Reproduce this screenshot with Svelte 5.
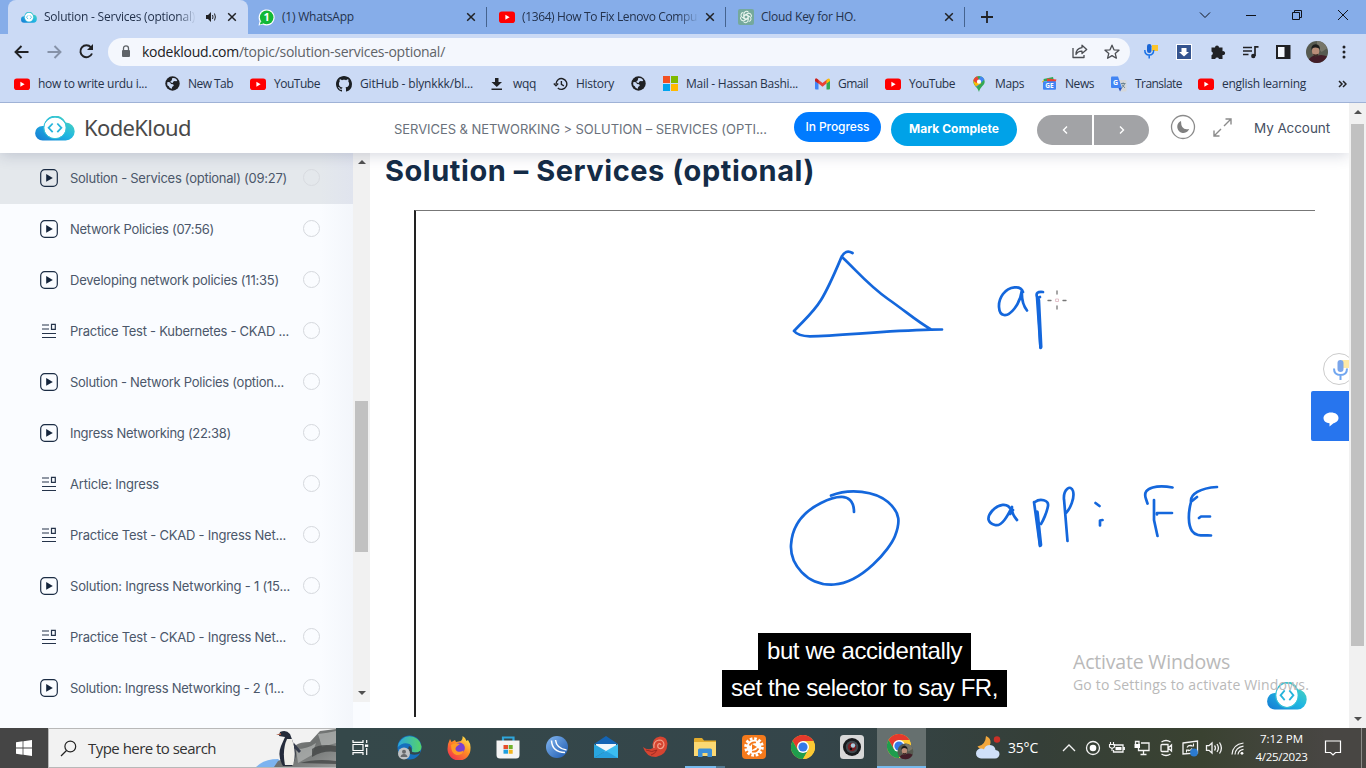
<script>
  const tabs = [
    { icon: 'kk', title: 'Solution - Services (optional)', w: 240, tw: 151, clip: 152, active: true },
    { icon: 'wa', title: '(1) WhatsApp', w: 239, tw: 72 },
    { icon: 'yt', title: '(1364) How To Fix Lenovo Compu', w: 239, tw: 175, clip: 177 },
    { icon: 'gpt', title: 'Cloud Key for HO.', w: 239, tw: 95 }
  ];
  const bookmarks = [
    { icon: 'yt', label: 'how to write urdu i...', w: 150, tw: 109 },
    { icon: 'globe', label: 'New Tab', w: 86, tw: 45 },
    { icon: 'yt', label: 'YouTube', w: 86, tw: 46 },
    { icon: 'github', label: 'GitHub - blynkkk/bl...', w: 153, tw: 113 },
    { icon: 'download', label: 'wqq', w: 63, tw: 23 },
    { icon: 'history', label: 'History', w: 78, tw: 38 },
    { icon: 'globe', label: '', w: 32, tw: 0 },
    { icon: 'ms', label: 'Mail - Hassan Bashi...', w: 152, tw: 112 },
    { icon: 'gmail', label: 'Gmail', w: 71, tw: 30 },
    { icon: 'yt', label: 'YouTube', w: 86, tw: 46 },
    { icon: 'maps', label: 'Maps', w: 70, tw: 29 },
    { icon: 'news', label: 'News', w: 70, tw: 29 },
    { icon: 'translate', label: 'Translate', w: 87, tw: 47 },
    { icon: 'yt', label: 'english learning', w: 112, tw: 84 }
  ];
  const lessons = [
    { kind: 'video', title: 'Solution - Services (optional) (09:27)', tw: 217, active: true },
    { kind: 'video', title: 'Network Policies (07:56)', tw: 144 },
    { kind: 'video', title: 'Developing network policies (11:35)', tw: 209 },
    { kind: 'quiz', title: 'Practice Test - Kubernetes - CKAD ...', tw: 219 },
    { kind: 'video', title: 'Solution - Network Policies (option...', tw: 214 },
    { kind: 'video', title: 'Ingress Networking (22:38)', tw: 161 },
    { kind: 'quiz', title: 'Article: Ingress', tw: 89 },
    { kind: 'quiz', title: 'Practice Test - CKAD - Ingress Net...', tw: 216 },
    { kind: 'video', title: 'Solution: Ingress Networking - 1 (15...', tw: 220 },
    { kind: 'quiz', title: 'Practice Test - CKAD - Ingress Net...', tw: 216 },
    { kind: 'video', title: 'Solution: Ingress Networking - 2 (1...', tw: 214 }
  ];
  const apps = ['taskview', 'edge', 'firefox', 'store', 'swirl', 'mail', 'shell', 'folder', 'orange', 'chrome', 'camera', 'chromeUser'];
  const tray = ['up', 'rec', 'battery', 'monitor', 'meet', 'sync', 'speaker', 'wifi'];

  // Spreads the letters so that the label takes up the given width.
  function fit(node, width) {
    const natural = node.getBoundingClientRect().width;
    const n = node.textContent.length;
    if (width && n) node.style.letterSpacing = `${(width - natural) / n}px`;
  }
</script>

{#snippet cloud(w, h)}
  <svg width={w} height={h} viewBox="0 0 40 26" preserveAspectRatio="none">
    <defs>
      <linearGradient id="kkg" x1="0" y1="1" x2="1" y2="0">
        <stop offset="0" stop-color="#1679d3" /><stop offset=".5" stop-color="#1fb5e2" /><stop offset="1" stop-color="#56dcb4" />
      </linearGradient>
    </defs>
    <path d="M7.800 25.500a7.600 7.600 0 0 1-.2-15.200h1.400a11.300 11.300 0 0 1 21.800-3.600A9.410 9.410 0 0 1 30.600 25.500z" fill="url(#kkg)" />
    <circle cx="20" cy="12.300" r="10.800" fill="#fff" />
    <circle cx="20" cy="12.300" r="11.300" fill="none" stroke="#35c4d6" stroke-width="1" />
    <path d="M17.700 7.800 13.600 12.300l4.100 4.500M22.300 7.800l4.100 4.500-4.100 4.500" fill="none" stroke="#27b5dc" stroke-width="1.800" />
  </svg>
{/snippet}

{#snippet chromeLogo()}
  <circle cx="12" cy="12" r="12" fill="#fcc934" />
  <path d="M1.600 6A12 12 0 0 1 22.400 6H12L6.800 15z" fill="#e5392c" />
  <path d="M1.600 6A12 12 0 0 0 12 24l5.200-9H6.800z" fill="#1f9d4d" />
  <path d="M12 24 17.200 15A6 6 0 0 0 17.200 9L22.400 6A12 12 0 0 1 12 24z" fill="#fcc934" />
  <circle cx="12" cy="12" r="6" fill="#fff" /><circle cx="12" cy="12" r="4.600" fill="#3579e8" />
{/snippet}

{#snippet face()}
  <circle cx="12" cy="12" r="12" fill="#565a50" />
  <path d="M12 0a12 12 0 0 1 11 8l-6 4-5-6z" fill="#77766a" />
  <path d="M3 20q4-5 9-4 6-2 11 1-4 7-11 7-6 0-9-4z" fill="#431d28" />
  <ellipse cx="10.500" cy="11" rx="4" ry="5.500" fill="#b98d78" />
  <path d="M6 10q-1-6 4.500-6.500Q16 4 15 10l-1-2q-4-2-7 0z" fill="#1d1c1c" />
  <path d="M7.500 14q3 1.500 6 0 0 3-3 3.500-2.500-.5-3-3.500z" fill="#3d2b27" />
{/snippet}

{#snippet icon(name)}
  {#if name === 'yt'}
    <svg width="16" height="16" viewBox="0 0 16 16"><rect y="2.500" width="16" height="11.500" rx="2.800" fill="#f00" /><path d="M6.400 5.800v4.900l4.200-2.450z" fill="#fff" /></svg>
  {:else if name === 'kk'}
    {@render cloud(16, 11)}
  {:else if name === 'wa'}
    <svg width="17" height="17" viewBox="0 0 17 17"><path d="M.5 16.500 1.600 12.300A8 8 0 1 1 4.800 15.500z" fill="#fff" /><circle cx="8.700" cy="8.400" r="6.800" fill="#12b836" /><path d="M1.800 15.400 3 12l2.500 2.500z" fill="#12b836" /><text x="8.600" y="12.400" text-anchor="middle" font-size="11" font-weight="700" fill="#fff" font-family="Open Sans, sans-serif">1</text></svg>
  {:else if name === 'gpt'}
    <svg width="16" height="16" viewBox="0 0 16 16"><rect width="16" height="16" rx="2" fill="#75a99c" />
      <g fill="none" stroke="#eaf6ef" stroke-width="1.050">
        {#each [0, 60, 120, 180, 240, 300] as a}<path transform="rotate({a} 8 8)" d="M5.900 8.800V4.700A2.500 2.500 0 0 1 10.500 3.500M5.900 6.900 9.300 5" />{/each}
      </g></svg>
  {:else if name === 'globe'}
    <svg width="15" height="15" viewBox="0 0 15 15"><circle cx="7.500" cy="7.500" r="7.200" fill="#202124" /><path d="M2.200 6.200q2-.6 3 .4l.8 1.300 2.200.3.600 1.500-1.700 1.300-.1 1.700q-2.700-.3-3.200-2.500L2.300 9.200zM7 2.200q2.500-.8 4.200.8l1.100 1.400-1 .9-1.700-.4-1.500.9-.3 1.200-1.900-.4-.5-1.300 1.500-1z" fill="#cbdaf5" /></svg>
  {:else if name === 'github'}
    <svg width="16" height="16" viewBox="0 0 16 16"><path fill="#1b1f23" d="M8 0C3.580 0 0 3.580 0 8c0 3.540 2.290 6.530 5.470 7.590.4.070.55-.17.55-.38 0-.19-.01-.82-.01-1.490-2.010.37-2.530-.49-2.690-.94-.09-.23-.48-.94-.82-1.130-.28-.15-.68-.52-.01-.53.63-.01 1.080.58 1.230.82.72 1.210 1.870.87 2.330.66.07-.52.28-.87.51-1.070-1.780-.2-3.640-.89-3.640-3.950 0-.87.31-1.590.82-2.150-.08-.2-.36-1.020.08-2.120 0 0 .67-.21 2.200.82.64-.18 1.320-.27 2-.27s1.360.09 2 .27c1.530-1.040 2.200-.82 2.200-.82.44 1.100.16 1.920.08 2.120.51.56.82 1.270.82 2.150 0 3.070-1.870 3.750-3.650 3.950.29.25.54.73.54 1.480 0 1.070-.01 1.930-.01 2.200 0 .21.15.46.55.38A8.010 8.010 0 0 0 16 8c0-4.420-3.580-8-8-8z" /></svg>
  {:else if name === 'download'}
    <svg width="14" height="14" viewBox="0 0 14 14"><path d="M5 1h3.500v4H12L6.800 10 1.500 5H5zM1.500 11.500H12V13H1.500z" fill="#202124" /></svg>
  {:else if name === 'history'}
    <svg width="15" height="14" viewBox="0 0 15 14"><path d="M3 7a5.400 5.400 0 1 1 1.800 4M.8 6.500 3 8.700 5.200 6.500M8.400 4v3.400l2.500 1.400" fill="none" stroke="#202124" stroke-width="1.400" /></svg>
  {:else if name === 'ms'}
    <svg width="15" height="15" viewBox="0 0 15 15"><path d="M0 0h7v7H0z" fill="#f25022" /><path d="M8 0h7v7H8z" fill="#7fba00" /><path d="M0 8h7v7H0z" fill="#00a4ef" /><path d="M8 8h7v7H8z" fill="#ffb900" /></svg>
  {:else if name === 'gmail'}
    <svg width="15" height="12" viewBox="0 0 15 12"><path d="M0 2v8.500q0 1 1 1h2.500V5z" fill="#4285f4" /><path d="M15 2v8.500q0 1-1 1h-2.500V5z" fill="#34a853" /><path d="M0 2q0-2 2-1.300L7.500 5 13 .7l-1.500 4.900L7.500 8.700l-4-3.100L0 3z" fill="#ea4335" /><path d="M11.500 2 13 .7q2-.7 2 1.500v.8l-3.500 2.600z" fill="#fbbc04" /><path d="M0 2.200Q0 0 2 .7l1.500 1.200v3.700L0 3z" fill="#c5221f" /></svg>
  {:else if name === 'maps'}
    <svg width="12" height="16" viewBox="0 0 12 16"><path d="M6 0a5.700 5.700 0 0 1 5.700 5.700C11.700 9.500 7 10.500 6 16 5 11.500.3 9.500.3 5.700A5.700 5.700 0 0 1 6 0z" fill="#34a853" /><path d="M7.800.3q2.500.7 3.500 3.200L4 11 2 9z" fill="#4285f4" /><path d="M1.600 2.100 4.500 4.400 8.500 7 3 10.400Q-1.200 6 1.600 2.100z" fill="#fbbc04" /><path d="M1.600 2.100A5.700 5.700 0 0 1 4.200.3L6 4 3.500 7 .4 5Q.5 3.500 1.600 2.100z" fill="#ea4335" /><circle cx="6" cy="5.700" r="2.100" fill="#fff" /></svg>
  {:else if name === 'news'}
    <svg width="15" height="13" viewBox="0 0 15 13"><path d="M1.500 2 11 0l1 4H2z" fill="#34a853" /><path d="M5 1.500 14.500 2.500 13 6H5z" fill="#ea4335" /><path d="M0 4.500 2 3v4z" fill="#fbbc04" /><rect x="1" y="4.300" width="13" height="8.500" rx="1" fill="#4285f4" /><text x="7.500" y="11" text-anchor="middle" font-size="6.500" font-weight="700" font-family="Open Sans, sans-serif" fill="#fff">GE</text></svg>
  {:else if name === 'translate'}
    <svg width="16" height="16" viewBox="0 0 16 16"><path d="M6 4h8.500q1 0 1 1v9.500q0 1-1 1H9z" fill="#d5d7da" /><path d="M1 .5h6L11 12H1q-1 0-1-1V1.500q0-1 1-1z" fill="#4285f4" /><path d="m7.500 12 1.500 3.500 2-3.500z" fill="#2a56c6" /><path d="M10 7.500h4.500M12.200 6.500v1M13.600 7.800q-1 3-3 4M11 8.500q1 2 3 3.300" stroke="#607d8b" fill="none" stroke-width=".9" /><text x="4.600" y="9" text-anchor="middle" font-size="7" font-weight="700" font-family="Open Sans, sans-serif" fill="#fff">G</text></svg>
  {/if}
{/snippet}

{#snippet app(name)}
  {#if name === 'taskview'}
    <svg width="17" height="17" viewBox="0 0 17 17" fill="none" stroke="#fff" stroke-width="1.200"><path d="M1 1v2.400h10V1M1 16v-2.400h10V16M1 5.500h10v6H1zM14.700 1v3M14.700 9v7" /><path d="M13 5.500h3.200v2.400H13z" fill="#fff" stroke="none" /></svg>
  {:else if name === 'edge'}
    <svg width="25" height="25" viewBox="0 0 25 25"><defs><linearGradient id="eg"><stop offset="0" stop-color="#2aa7e0" /><stop offset="1" stop-color="#56d467" /></linearGradient></defs><circle cx="12.500" cy="12.500" r="12" fill="#1670bd" /><path d="M.7 12A12 12 0 0 1 24.500 11.500q0 6-6.500 6-4 0-3-2.500Q16 11 12.500 9 6 6.500.7 12z" fill="url(#eg)" /><path d="M11 12.500q-1 6 3.500 8.500 5 1 8.500-3l2 3-5 4-4-2q-8-3-5-10.500z" fill="#35484a" opacity="0" /><path d="M12 11q3 1.500 2.800 4-.8 2.500 3.200 2.500 3 0 5-1.500l.5 2q-5 3-10 1-4-2-1.500-8z" fill="#34464a" /><circle cx="7" cy="18.500" r="6" fill="#bfc2c4" /><circle cx="7" cy="16.700" r="2" fill="#67696c" /><path d="M3.500 22q.5-3 3.500-3t3.500 3z" fill="#67696c" /></svg>
  {:else if name === 'firefox'}
    <svg width="24" height="25" viewBox="0 0 24 25"><defs><linearGradient id="fx" x1="1" y1="0" x2=".2" y2="1"><stop offset=".1" stop-color="#ffe14a" /><stop offset=".5" stop-color="#ff8a25" /><stop offset="1" stop-color="#f0304f" /></linearGradient></defs><path d="M1 9 3 4l1.500 3L8 5l1 2 5-1q2-2 1.500-5 3 1.500 4 5l1.500-1q3 4 2.500 9A11.500 11.500 0 0 1 .5 14z" fill="url(#fx)" /><circle cx="12.500" cy="13" r="5.400" fill="#7b3fd0" /><path d="M4 10q4-3 9-1l-3.500 2.500q-2.500 3 1 5 3 1 6-1-1 5-7 4.500Q4 18.500 4 10z" fill="#ff9a26" /></svg>
  {:else if name === 'store'}
    <svg width="24" height="24" viewBox="0 0 24 24"><path d="M7 7V2.500h10.500V7" fill="none" stroke="#2fa5da" stroke-width="2.200" /><path d="M.5 5.500h23V20q0 3.500-3.500 3.500H4Q.5 23.500.5 20z" fill="#f4f4f4" /><path d="M7.500 10H12v4H7.500z" fill="#e64d2b" /><path d="M12.700 10h4v4h-4z" fill="#70b12c" /><path d="M7.500 14.700H12v4H7.500z" fill="#1d9fe0" /><path d="M12.700 14.700h4v4h-4z" fill="#f3b51e" /></svg>
  {:else if name === 'swirl'}
    <svg width="22" height="22" viewBox="0 0 22 22"><defs><linearGradient id="sw" x1="0" y1="0" x2="1" y2="1"><stop offset="0" stop-color="#85b9f2" /><stop offset="1" stop-color="#1c58ae" /></linearGradient></defs><circle cx="11" cy="11" r="11" fill="url(#sw)" /><path d="M9.500 4q1 8.500 11 10M5.500 4.500Q6 16 19 16.500" fill="none" stroke="#fff" stroke-width="1.500" /></svg>
  {:else if name === 'mail'}
    <svg width="24" height="22" viewBox="0 0 24 22"><path d="M0 8 12 0l12 8z" fill="#1464b4" /><path d="M2 8h20v8L13 18 2 12z" fill="#f1f6fa" /><path d="M0 8l12 7L0 22z" fill="#29a6df" /><path d="M24 8v14H0l12-7z" fill="#3bbdf0" /><path d="M0 22h24L12 15z" fill="#1d8cd2" opacity=".6" /></svg>
  {:else if name === 'shell'}
    <svg width="25" height="22" viewBox="0 0 25 22"><path d="M0 11q5 4 10 1-2-10 7-11.500 7 0 7.500 7Q24 19 13 21 3 21 0 11z" fill="#d64431" /><path d="M11 12q-1-7 5-8 5 0 5 5-1 4-4.500 3.500-2.500-1-1.500-4 2-2 3 .5" fill="none" stroke="#f2a08a" stroke-width="1.200" /><path d="M3 14q6 3 11 0M8 19q4-1 6-5" stroke="#9c2a22" fill="none" /></svg>
  {:else if name === 'folder'}
    <svg width="22" height="19" viewBox="0 0 22 19"><path d="M0 1q0-1 1-1h7l2 2.500h12V18H0z" fill="#e2ab2d" /><path d="M0 4h22v14H0z" fill="#fbd872" /><path d="M4 19v-7q0-1.500 1.500-1.500h11Q18 10.500 18 12v7h-4.500v-4h-5v4z" fill="#3d8fd6" /></svg>
  {:else if name === 'orange'}
    <svg width="24" height="24" viewBox="0 0 24 24"><rect width="24" height="24" rx="4" fill="#f47a1c" /><circle cx="12" cy="12" r="8.300" fill="none" stroke="#fff" stroke-width="3" stroke-dasharray="2.600 1.740" /><circle cx="12" cy="12" r="7.300" fill="#fff" /><path d="M7.500 10.500q2-4 6.500-3M16.500 13.500q-2 4-6.500 3" stroke="#f47a1c" stroke-width="1.700" fill="none" /><path d="m10 9 5 3-5 3z" fill="#f47a1c" /></svg>
  {:else if name === 'chrome'}
    <svg width="24" height="24" viewBox="0 0 24 24">{@render chromeLogo()}</svg>
  {:else if name === 'camera'}
    <svg width="24" height="24" viewBox="0 0 24 24"><rect width="24" height="24" rx="3.500" fill="#d8d8d8" /><circle cx="12" cy="12" r="9" fill="#181a1c" /><circle cx="12" cy="12" r="6.200" fill="#40494e" /><circle cx="12" cy="12" r="4.200" fill="#7a1f22" /><circle cx="13" cy="10.500" r="2.200" fill="#a9cfe0" /><circle cx="11" cy="14" r="1.200" fill="#111" /></svg>
  {:else}
    <svg width="28" height="26" viewBox="0 0 28 26">{@render chromeLogo()}<g transform="translate(10.500 9.500) scale(.66)">{@render face()}</g></svg>
  {/if}
{/snippet}

{#snippet trayIcon(name)}
  <svg width="18" height="18" viewBox="0 0 18 18" fill="none" stroke="#f4f4f4" stroke-width="1.300">
    {#if name === 'up'}<path d="M3 12l6-6 6 6" />
    {:else if name === 'rec'}<circle cx="9" cy="9" r="6.500" stroke-width="1.300" /><circle cx="9" cy="9" r="3.300" fill="#fff" stroke="none" />
    {:else if name === 'battery'}<path d="M5.500 6H15v7H5.500v-2M16.300 8v3" /><path d="M7.500 8h6v3.200h-6z" fill="#fff" stroke="none" /><path d="M2.500 3v2M5.500 3v2M1.500 5.500h5V8L4 9.500 1.500 8zM4 9.500V12" stroke-width="1.100" />
    {:else if name === 'monitor'}<path d="M8 4h8v7.500H5.500V9M10.500 12v3M7.500 15.500h6" /><path d="M1.500 5h5.500v4H1.500z" fill="#fff" stroke="none" /><path d="M2.500 5V2.500h3.500V5" />
    {:else if name === 'meet'}<path d="M5 5.500h6v7H5q-1 0-1-1v-5q0-1 1-1zM11 9l3.500-3v6zM4.500 3q4.500-3 9 0M4.500 15q4.500 3 9 0" />
    {:else if name === 'sync'}<path d="M2 4 16.500 2v12L2 15z" /><path d="M6 8.500q1-2.500 5-2M12.500 4.500V7h-3M11 9.500q-1 2.500-4.500 2M5.500 13.500V11H8" stroke-width="1.100" /><circle cx="13" cy="13.500" r="3.900" fill="#2b7bd0" stroke="none" />
    {:else if name === 'speaker'}<path d="M1.500 6.700H4L7 4v10L4 11.300H1.500zM9.500 6.500q1.800 2.500 0 5M12 5q2.800 4 0 8M14.500 3.500q3.800 5.500 0 11" />
    {:else}<path d="M3 15.500Q3.500 5.500 14.500 4M6 15.500Q6.500 8.500 14.500 7.200M9 15.500q.5-4.500 5.500-5.200" stroke-width="1.200" /><circle cx="13" cy="14.300" r="1.400" fill="#fff" stroke="none" />
    {/if}
  </svg>
{/snippet}

<div class="screen">
  <div class="tabs">
    {#each tabs as t}
      <div class="tab" class:active={t.active} style="width:{t.w}px">
        <span class="fav">{@render icon(t.icon)}</span>
        <span class="ttl" class:clip={t.clip} style={t.clip ? `width:${t.clip}px` : ''}><span class="txt" use:fit={t.tw}>{t.title}</span></span>
        {#if t.active}
          <svg class="snd" width="12" height="10" viewBox="0 0 12 10"><path d="M1 3h2l3-3v10L3 7H1z" fill="#202124" /><path d="M7.500 3q1 2 0 4M9.500 1.500q1.800 3.500 0 7" fill="none" stroke="#202124" /></svg>
        {/if}
        <svg class="x" width="10" height="10" viewBox="0 0 10 10"><path d="M1.200 1.200l7.600 7.600M8.800 1.200l-7.600 7.600" stroke="#202124" stroke-width="1.500" /></svg>
      </div>
    {/each}
    <svg class="plus" width="12" height="12" viewBox="0 0 12 12"><path d="M6 0v12M0 6h12" stroke="#202124" stroke-width="1.800" /></svg>
    <div class="winctl">
      <svg width="12" height="12" viewBox="0 0 12 12"><path d="M1 3.500l5 5 5-5" /></svg>
      <svg width="12" height="12" viewBox="0 0 12 12"><path d="M1 6.500h10" /></svg>
      <svg width="12" height="12" viewBox="0 0 12 12"><path d="M1.500 3.500h7v7h-7zM3.500 3.500v-2h7v7h-2" /></svg>
      <svg width="12" height="12" viewBox="0 0 12 12"><path d="M1 1l10 10M11 1 1 11" /></svg>
    </div>
  </div>

  <div class="toolbar">
    <div class="nav">
      <svg width="15" height="14" viewBox="0 0 15 14"><path d="M14.500 7H1.500M7.500 1l-6 6 6 6" /></svg>
      <svg width="15" height="14" viewBox="0 0 15 14" class="dim"><path d="M.5 7h13M7.500 1l6 6-6 6" /></svg>
      <svg width="15" height="15" viewBox="0 0 15 15"><path d="M13 9.500A6 6 0 1 1 12 3.400" /><path d="M14 0v6H8z" fill="#202124" stroke="none" /></svg>
    </div>
    <div class="omni">
      <svg width="10" height="13" viewBox="0 0 10 13"><path d="M2.500 5.500V3.300a2.500 2.500 0 0 1 5 0v2.200" fill="none" stroke="#5f6368" stroke-width="1.300" /><rect x="1" y="5" width="8" height="7" rx="1" fill="#5f6368" /></svg>
      <span class="url txt" use:fit={303}>kodekloud.com<i>/topic/solution-services-optional/</i></span>
      <svg class="share" width="16" height="15" viewBox="0 0 16 15"><path d="M1 4v9.500h11V11M10 1.200l4.700 4.300L10 9.500V7.200Q6 7 4 10.500 4 4.500 10 3.700z" /></svg>
      <svg width="16" height="15" viewBox="0 0 16 15"><path d="M8 1.200l2 4.600 5 .4-3.800 3.200 1.200 4.800L8 11.600l-4.400 2.600 1.200-4.800L1 6.200l5-.4z" /></svg>
    </div>
    <div class="exts">
      <svg width="16" height="17" viewBox="0 0 16 17"><rect x="9" y="2" width="6" height="6" fill="#fcc52c" /><rect x="4" y="1" width="4.500" height="9" rx="2.200" fill="#1a66d6" /><path d="M1.800 7q0 5 4.400 5t4.500-5M6.200 12v3.500" fill="none" stroke="#1a73e8" stroke-width="1.500" /></svg>
      <svg width="16" height="16" viewBox="0 0 16 16"><path d="M0 0h16v16H0z" fill="#fff" /><path d="M1 1h14v14H1z" fill="#35548f" /><path d="M5.500 4h5v4h2.500L8 12.500 3 8h2.500z" fill="#fff" /></svg>
      <svg width="16" height="16" viewBox="0 0 16 16"><path d="M5 3.500a2 2 0 1 1 4 0h3.500v3.700a2 2 0 1 1 0 3.800v4H9a2 2 0 0 0-3.800 0H1.500v-3.800a2 2 0 0 0 0-3.800V3.500z" fill="#202124" /></svg>
      <svg width="16" height="14" viewBox="0 0 16 14"><path d="M0 2.500h9M0 6h9M0 9.500h5.500M12 11V1.800h3.500" fill="none" stroke="#202124" stroke-width="1.700" /><circle cx="10.300" cy="11" r="2.200" fill="#202124" /></svg>
      <svg width="15" height="14" viewBox="0 0 15 14"><path d="M1 1h12.500v12H1z" fill="#f5f8fd" stroke="#202124" stroke-width="2" /><path d="M8.500 1h5v12h-5z" fill="#202124" /></svg>
      <svg width="22" height="22" viewBox="0 0 24 24">{@render face()}</svg>
      <svg width="4" height="14" viewBox="0 0 4 14" fill="#202124"><circle cx="2" cy="2" r="1.500" /><circle cx="2" cy="7" r="1.500" /><circle cx="2" cy="12" r="1.500" /></svg>
    </div>
  </div>

  <div class="bookmarks">
    {#each bookmarks as b}
      <div class="bm" style="width:{b.w}px"><span class="bi">{@render icon(b.icon)}</span><span class="txt" use:fit={b.tw}>{b.label}</span></div>
    {/each}
    <svg class="more" width="9" height="8" viewBox="0 0 9 8"><path d="M1 1l3 3-3 3M5 1l3 3-3 3" fill="none" stroke="#202124" stroke-width="1.500" /></svg>
  </div>

  <div class="page">
    <div class="site">
      <header>
        <div class="brand">{@render cloud(40, 25)}<span class="txt" use:fit={107}>KodeKloud</span></div>
        <span class="crumb txt" use:fit={373}>SERVICES &amp; NETWORKING &gt; SOLUTION – SERVICES (OPTI...</span>
        <button class="prog"><span class="txt" use:fit={64}>In Progress</span></button>
        <button class="mark"><span class="txt" use:fit={90}>Mark Complete</span></button>
        <div class="pager">
          <button aria-label="Previous"><svg width="6" height="8" viewBox="0 0 6 8"><path d="M5 .5 1.500 4 5 7.500" /></svg></button>
          <button aria-label="Next"><svg width="6" height="8" viewBox="0 0 6 8"><path d="M1 .5 4.500 4 1 7.500" /></svg></button>
        </div>
        <svg class="moon" width="26" height="26" viewBox="0 0 26 26"><circle cx="13" cy="13" r="11.500" fill="none" stroke="#8b8b8b" stroke-width="1.300" /><path d="M11 7a6.200 6.200 0 1 0 8.200 8Q11 17 11 7z" fill="#808080" /></svg>
        <svg class="expand" width="19" height="19" viewBox="0 0 19 19"><path d="M12.500 1H18v5.500M18 1l-7 7M6.500 18H1v-5.500M1 18l7-7" fill="none" stroke="#8b8b8b" stroke-width="1.400" /></svg>
        <span class="acct txt" use:fit={76}>My Account</span>
      </header>

      <div class="body">
        <aside>
          <div class="list">
            {#each lessons as l}
              <div class="row" class:active={l.active}>
                {#if l.kind === 'video'}
                  <svg width="18" height="18" viewBox="0 0 18 18"><rect x=".7" y=".7" width="16.600" height="16.600" rx="4" fill="none" stroke="#1b2c44" stroke-width="1.200" /><path d="M6.200 5v7.800L12.800 9z" fill="#14243b" /></svg>
                {:else}
                  <svg width="18" height="18" viewBox="0 0 18 18"><path d="M2 3h7M2 7h7M2 11.500h14M2 15.500h14M11.500 2.300h3.800v5h-3.800z" fill="none" stroke="#24334a" stroke-width="1.200" /></svg>
                {/if}
                <span class="lt"><span class="txt" use:fit={l.tw}>{l.title}</span></span>
                <i class="dot"></i>
              </div>
            {/each}
          </div>
          <div class="sb side"><b class="up"></b><i class="thumb"></i><b class="down"></b></div>
        </aside>

        <main>
          <h1><span class="txt" use:fit={430}>Solution – Services (optional)</span></h1>
          <div class="video">
            <svg class="ink" viewBox="416 211 899 505" fill="none" stroke="#1467dc" stroke-width="2.700" stroke-linecap="round" stroke-linejoin="round">
              <path d="M852.500 253q-7-4-11 4C836 270 829 287 821 300S804 320 794 331q4 5 16 5.300C840 336 880 331 931 329.700L942 329.500M842 257C858 272 868 285 888 299S915 320 931 329.500" />
              <path d="M1023 292C1021 285 1009 286 1003 294S998 314 1004 315 1020 305 1022 290Q1021 303 1027 310.500" />
              <path d="M1043 292Q1035 291 1037 297L1040.500 348M1038 298l2-1" /><path d="M1038.500 300l2.300 47" stroke-width="3.500" />
              <path d="M831 495.500C850 488 875 491 888 502S900 523 895 536 862 583 834 584.500 790 563 791 545 801 513 821 503 848 498 850 500 854 507 854 512" />
              <path d="M1011 510C1008 502 998 504 992 511S988 523 995 525 1008 515 1012 507Q1011 513 1017 520M1010 514l3-4" />
              <path d="M1034 502l6 44M1035 502c5-4 14-2 13 4s-5 15-7 18" /><path d="M1037 512l3.500 33" stroke-width="3.700" />
              <path d="M1064 499l3.500 42M1064 500c-1-11 7-16 9-9s-3 18-7 22M1095.500 503l4 3M1100 525.500v-5l2.500-.5" />
              <path d="M1172.500 487.500C1160 485 1141 486 1146 499l1.500 4.500M1154 500v20l3.500 16M1157 514.500v-1.500h15M1217 487C1200 488 1190 494 1191 502 1188 513 1188 525 1192 531S1204 535 1211 535.500M1192 501l5-4M1199 518l2-1.500h9" />
              <g stroke="#777" stroke-width="1.300"><path d="M1057 291v3M1057 306v3M1048 300.500h3M1063 300.500h3" /><path d="M1056 299h2.500v2.500H1056z" stroke="#d8a9b5" stroke-width=".7" /></g>
            </svg>
            <div class="caps">
              <span class="cap"><span class="txt" use:fit={195}>but we accidentally</span></span>
              <span class="cap"><span class="txt" use:fit={267}>set the selector to say FR,</span></span>
            </div>
            <div class="badge">{@render cloud(40, 28)}</div>
          </div>
        </main>
      </div>

      <div class="voice"><svg width="18" height="24" viewBox="0 0 18 24"><path d="M10 2h7v8h-7z" fill="#fde9a6" /><rect x="5.500" y="2" width="6" height="12" rx="3" fill="#7aa5ea" /><path d="M2 10.500q0 6.500 6.500 6.500t6.500-6.500M8.500 17v5" fill="none" stroke="#72a7f0" stroke-width="2" /></svg></div>
      <div class="chat"><svg width="16" height="16" viewBox="0 0 16 16"><path d="M8 1.500c4.300 0 7.500 2.200 7.500 5.500 0 3-2.500 4.600-5 5.200L6.500 15.500v-3.200C3 12 .5 10 .5 7S3.700 1.500 8 1.500z" fill="#fff" /></svg></div>
      <div class="activate"><div class="a1"><span class="txt" use:fit={157}>Activate Windows</span></div><div class="a2"><span class="txt" use:fit={236}>Go to Settings to activate Windows.</span></div></div>
    </div>
    <div class="sb main"><b class="up"></b><i class="thumb"></i><b class="down"></b></div>
  </div>

  <div class="taskbar">
    <div class="start"><svg width="16" height="16" viewBox="0 0 16 16"><path d="M0 2.300 6.600 1.300v6.300H0zM7.400 1.200 16 0v7.600H7.400zM0 8.400h6.600v6.300L0 13.700zM7.400 8.400H16V16L7.400 14.800z" fill="#fff" /></svg></div>
    <div class="search">
      <svg width="17" height="17" viewBox="0 0 17 17"><circle cx="10.300" cy="6.500" r="5.400" fill="none" stroke="#222" stroke-width="1.200" /><path d="M6.500 10.500 1 16" stroke="#222" stroke-width="1.200" /></svg>
      <span class="txt" use:fit={128}>Type here to search</span>
      <svg class="pic" width="80" height="38" viewBox="0 0 80 38">
        <defs><linearGradient id="rk" x1="0" y1="0" x2="1" y2="1"><stop offset="0" stop-color="#8d8f8e" /><stop offset=".5" stop-color="#6e7170" /><stop offset="1" stop-color="#969897" /></linearGradient></defs>
        <path d="M0 38Q8 30 22 30l10 8z" fill="#7db3ef" />
        <path d="M22 32q14-4 18-16 4-3 14-3L64 2l16-2v38H18z" fill="url(#rk)" />
        <path d="M40 20q12 0 20-6l-4 12-14 8zM62 5q10-1 18-3v12l-14 4z" fill="#b4b6b5" opacity=".7" />
        <path d="M56 20q8-6 24-3v6q-12-2-24 5zM44 34q16-5 36-2v3z" fill="#3f4241" opacity=".75" />
        <path d="M24 3q6-3 10 2l3 8q4 8 2 17l-3 7h-9q-6-10-2-20l4-9-6-1z" fill="#242b3a" />
        <path d="M31 10q-5 11-2 26h8q4-12-1-26z" fill="#efeee9" />
        <path d="m38 14 7 8-2 2-5-5z" fill="#343b4a" /><path d="m20 6 5-2v2z" fill="#a85b45" />
      </svg>
    </div>
    <div class="apps">
      {#each apps as a}<div class="app" class:on={a === 'chromeUser'} class:open={a === 'folder'}>{@render app(a)}</div>{/each}
    </div>
    <div class="weather">
      <svg width="26" height="24" viewBox="0 0 26 24"><path d="M11 0q5 2 4.500 7-1 6-7 6.500-4 0-6-3 8-1 8.500-10.500z" fill="#f2a73c" /><path d="M6 22.500a5 5 0 0 1 0-10q2 0 3 .7 1.500-4.200 6-4.200 5 .5 5.500 5 4 .5 4 4.200-.5 4-4.500 4.300z" fill="#cfe0f8" /><circle cx="22" cy="3.500" r="3.200" fill="#c93027" /></svg>
      <span class="txt" use:fit={30}>35°C</span>
    </div>
    <div class="tray">{#each tray as t}<span>{@render trayIcon(t)}</span>{/each}</div>
    <div class="clock"><div><span class="txt" use:fit={43}>7:12 PM</span></div><div><span class="txt" use:fit={52}>4/25/2023</span></div></div>
    <svg class="note" width="18" height="18" viewBox="0 0 18 18"><path d="M1.500 2h15v11.500h-5L9 16l-2.500-2.500h-5z" fill="none" stroke="#fff" stroke-width="1.200" /></svg>
    <i class="peek"></i>
  </div>
</div>

<style>
  :global(body) { margin: 0; overflow: hidden; }
  .screen { width: 1366px; height: 768px; display: flex; flex-direction: column; overflow: hidden; font: 12px/16px "Open Sans", "Noto Sans", sans-serif; color: #202124; background: #fff; }
  .screen * { box-sizing: border-box; }
  svg { display: block; flex: none; }
  button { border: 0; padding: 0; margin: 0; }
  .txt { display: inline-block; white-space: nowrap; flex: none; }

  .tabs { height: 34px; background: #86ade9; display: flex; align-items: center; padding-left: 8px; flex: none; }
  .tab { height: 34px; display: flex; align-items: center; padding: 0 11px; flex: none; background: linear-gradient(#45638f, #45638f) right 7px / 1px 20px no-repeat; }
  .tab.active { background: #cbdaf5; border-radius: 8px 8px 0 0; padding-left: 12px; }
  .tab:nth-child(2) { padding-left: 10px; }
  .fav { width: 17px; display: flex; justify-content: center; margin-right: 7px; }
  .ttl { color: #23324c; }
  .clip { overflow: hidden; -webkit-mask-image: linear-gradient(90deg, #000 88%, transparent); mask-image: linear-gradient(90deg, #000 88%, transparent); height: 16px; }
  .snd { margin-left: 9px; }
  .x { margin-left: auto; }
  .plus { margin-left: 16px; }
  .winctl { margin-left: auto; display: flex; gap: 34px; padding-right: 17px; margin-top: -5px; }
  .winctl svg { fill: none; stroke: #10131a; stroke-width: 1; }

  .toolbar { height: 35px; background: #cbdaf5; display: flex; align-items: center; flex: none; padding-left: 14px; }
  .nav { display: flex; gap: 17.500px; width: 94px; align-items: center; flex: none; }
  .nav svg { fill: none; stroke: #202124; stroke-width: 1.900; }
  .nav .dim { stroke: #8692a8; }
  .omni { width: 1022px; height: 28px; border-radius: 14px; background: #f4f7fd; display: flex; align-items: center; padding: 0 10px 0 13px; flex: none; }
  .url { font-size: 14px; line-height: 20px; margin-left: 11px; color: #202124; }
  .url i { font-style: normal; color: #5f6368; }
  .omni .share { margin-left: auto; margin-right: 16px; }
  .omni svg:nth-of-type(n + 2) { fill: none; stroke: #4a4d52; stroke-width: 1.300; stroke-linejoin: round; }
  .exts { flex: 1; display: flex; align-items: center; justify-content: space-between; padding: 0 20px 0 13px; }
  .exts svg:nth-child(6) { margin: 0 -3px; }

  .bookmarks { height: 34px; background: #cbdaf5; border-bottom: 1px solid #9fb2d6; display: flex; align-items: center; flex: none; padding: 0 0 4px 14px; }
  .bm { display: flex; align-items: center; gap: 8px; flex: none; color: #26334a; }
  .bi { width: 16px; height: 16px; display: flex; align-items: center; justify-content: center; }
  .more { margin-left: 28px; }

  .page { height: 625px; display: flex; flex: none; }
  .site { width: 1349px; display: flex; flex-direction: column; position: relative; overflow: hidden; font-family: Inter, sans-serif; }
  header { height: 50px; flex: none; display: flex; align-items: center; background: #fff; box-shadow: 0 2px 14px rgba(40, 50, 90, .2); position: relative; z-index: 1; padding-left: 35px; }
  .brand { display: flex; align-items: center; gap: 9px; width: 359px; }
  .brand .txt { font: 22px/28px "Noto Sans", sans-serif; color: #494949; margin-top: -2px; }
  .crumb { font-size: 13px; color: #6a717b; margin-top: 2px; }
  .prog { margin: -2px 0 0 27px; width: 87px; height: 30px; border-radius: 15px; background: #007bff; color: #fff; font: 500 12px/16px Inter, sans-serif; }
  .mark { margin: 2px 0 0 10px; width: 126px; height: 33px; border-radius: 17px; background: #00a2e8; color: #fff; font: 700 12px/16px Inter, sans-serif; }
  .pager { display: flex; gap: 2px; margin: 4px 0 0 20px; }
  .pager button { width: 55px; height: 30px; background: #a2a3a6; border-radius: 15px 0 0 15px; display: flex; align-items: center; justify-content: center; }
  .pager button + button { border-radius: 0 15px 15px 0; }
  .pager path { fill: none; stroke: #fff; stroke-width: 1.400; }
  .moon { margin: -2px 0 0 21px; }
  .expand { margin-left: 17px; margin-top: -1px; }
  .acct { margin-left: 22px; font-size: 13.500px; line-height: 18px; color: #465063; }

  .body { flex: 1; display: flex; min-height: 0; }
  aside { width: 370px; display: flex; background: #fafcff; flex: none; }
  .list { width: 353px; background: linear-gradient(90deg, transparent 320px, #f3f6fb); overflow: hidden; }
  .row { height: 51px; display: flex; align-items: center; padding: 0 33px 2px 40px; }
  .row.active { background: linear-gradient(90deg, #e4e8ec 320px, #e0e4ee); }
  .lt { margin-left: 12px; flex: 1; font-size: 13px; color: #4b576a; padding-top: 1px; }
  .dot { width: 17px; height: 17px; border: 1.500px solid #d5d8dd; border-radius: 50%; }
  .active .dot { border-color: #d8dbe0; }

  .sb { background: #f1f1f1; width: 17px; display: flex; flex-direction: column; align-items: center; flex: none; }
  .sb.side { height: 549px; }
  .sb .thumb { width: 13px; background: #c1c1c1; }
  .side .thumb { height: 151px; margin-top: 237px; }
  .main .thumb { height: 522px; margin-top: 10px; }
  .sb b { border: 4px solid transparent; border-top: 0; border-bottom: 4px solid #505050; margin-top: 7px; }
  .sb b.down { border-bottom: 0; border-top: 4px solid #505050; margin: auto 0 7px; }

  main { flex: 1; background: #fff; min-width: 0; }
  h1 { margin: 0 0 0 15px; font: 700 29px/36px Inter, sans-serif; color: #142c47; height: 57px; }
  .video { margin-left: 44px; width: 901px; height: 507px; border-left: 2px solid #222; border-top: 1px solid #777; position: relative; }
  .ink { width: 899px; height: 505px; }
  .caps { position: absolute; left: 0; right: 2px; top: 422px; display: flex; flex-direction: column; align-items: center; }
  .cap { background: #000; color: #fff; height: 37px; padding: 0 9px; font: 24px/35px "Liberation Sans", Arial, sans-serif; }
  .badge { position: absolute; left: 851px; top: 471px; }
  .voice { position: absolute; left: 1323px; top: 250px; width: 32px; height: 32px; border: 1px solid #ccc; border-radius: 50%; background: #fff; padding: 4px 0 0 8px; z-index: 2; }
  .chat { position: absolute; right: 0; top: 288px; width: 38px; height: 50px; background: #2775ee; border-radius: 2px 0 0 2px; display: flex; align-items: center; justify-content: center; padding: 5px 0 0 2px; z-index: 2; }
  .activate { position: absolute; left: 1073px; top: 547px; color: #b9b9b9; font-family: "Open Sans", sans-serif; white-space: nowrap; }
  .a1 { font-size: 19.500px; line-height: 24px; }
  .a2 { font-size: 14px; line-height: 22px; }

  .taskbar { height: 40px; flex: none; display: flex; align-items: center; background: linear-gradient(90deg, #35484a 25%, #34454a 60%, #353f38 76%, #3a4231 88%, #484643 97%); color: #fff; }
  .start { width: 48px; height: 40px; background: #454545; display: flex; align-items: center; justify-content: center; }
  .search { width: 288px; height: 40px; background: #f2f2f2; border: 1px solid #b8b8b8; border-right: 0; display: flex; align-items: center; padding-left: 11px; color: #333; font-size: 15px; line-height: 20px; overflow: hidden; flex: none; }
  .search .txt { margin-left: 11px; }
  .pic { margin-left: auto; }
  .apps { display: flex; flex: none; width: 589px; }
  .app { width: 49.170px; height: 40px; display: flex; align-items: center; justify-content: center; flex: none; border-bottom: 2px solid transparent; }
  .app.on { background: #66706f; border-bottom-color: #76b9ed; }
  .app.open { background: linear-gradient(90deg, #76b9ed 31px, #51778f 31px) 5px 100% / 40px 2px no-repeat border-box; }
  .weather { display: flex; align-items: center; margin-left: 50px; gap: 7px; font-size: 14px; line-height: 20px; }
  .tray { display: flex; margin-left: 19px; flex: none; }
  .tray span { width: 24.200px; display: flex; justify-content: center; }
  .clock { width: 60px; text-align: center; font-size: 11.500px; line-height: 18px; flex: none; margin-left: 1px; }
  .note { margin-left: 12px; }
  .peek { margin-left: auto; width: 1px; height: 40px; background: #8b8b88; margin-right: 4px; }
</style>
